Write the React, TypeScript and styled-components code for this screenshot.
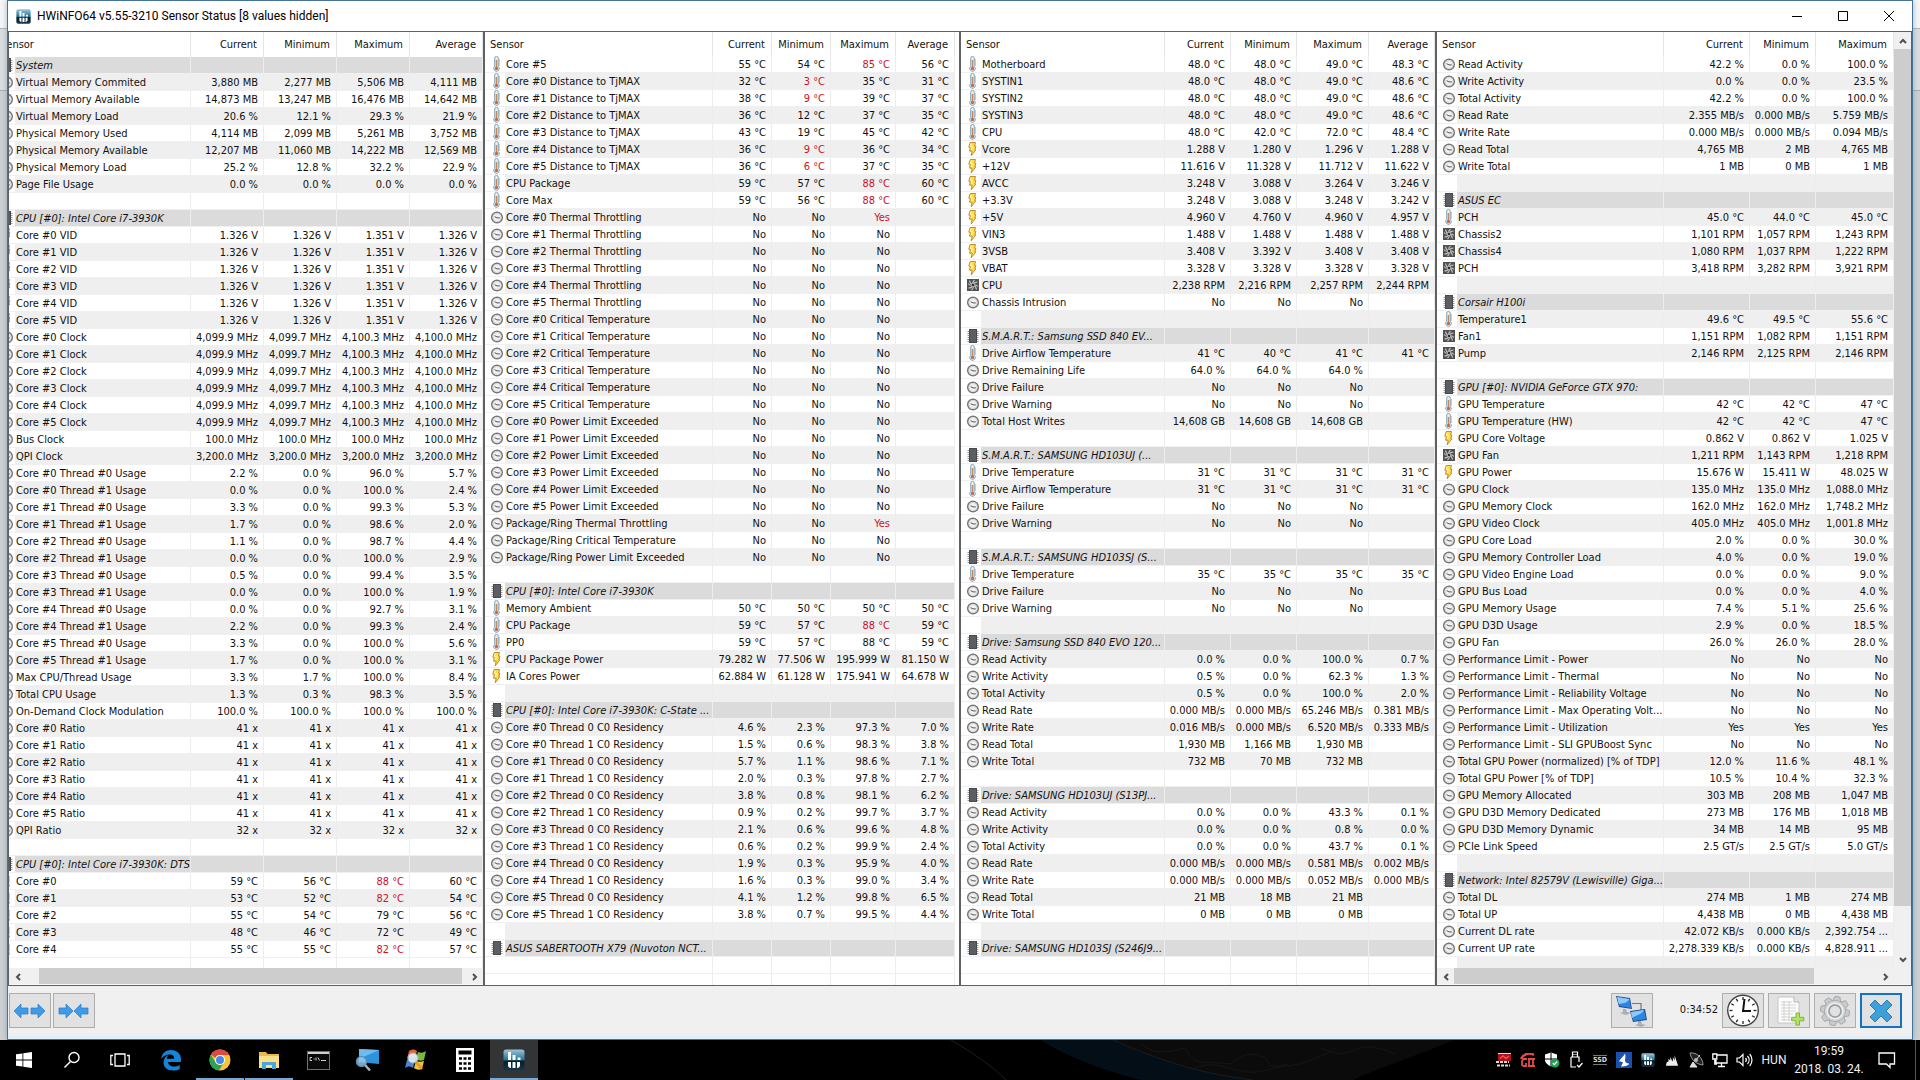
import React from "react";
import styled, { createGlobalStyle, css } from "styled-components";

/* ---------- data ---------- */

type Kind = "group" | "temp" | "volt" | "fan" | "clock" | "blank" | "empty";
interface Row { kind: Kind; label: string; values: string[] }
interface PanelData {
  id: string;
  headers: string[];
  widths: number[];
  rows: Row[];
  headHeight: number;
  shift?: number;
  gutter?: number;
  hbar?: { from: number; to: number };
  vbar?: boolean;
}

const KINDS: Record<string, Kind> = { g: "group", t: "temp", v: "volt", f: "fan", c: "clock", b: "blank", e: "empty" };

/* One line per row: kind | label | values. "!" marks a reading in alarm colour. */
function parse(text: string): Row[] {
  return text.trim().split("\n").map((line) => {
    const [k, label = "", ...values] = line.trim().split("|");
    return { kind: KINDS[k], label, values };
  });
}

const systemRows = parse(`
g|System
c|Virtual Memory Commited|3,880 MB|2,277 MB|5,506 MB|4,111 MB
c|Virtual Memory Available|14,873 MB|13,247 MB|16,476 MB|14,642 MB
c|Virtual Memory Load|20.6 %|12.1 %|29.3 %|21.9 %
c|Physical Memory Used|4,114 MB|2,099 MB|5,261 MB|3,752 MB
c|Physical Memory Available|12,207 MB|11,060 MB|14,222 MB|12,569 MB
c|Physical Memory Load|25.2 %|12.8 %|32.2 %|22.9 %
c|Page File Usage|0.0 %|0.0 %|0.0 %|0.0 %
b
g|CPU [#0]: Intel Core i7-3930K
v|Core #0 VID|1.326 V|1.326 V|1.351 V|1.326 V
v|Core #1 VID|1.326 V|1.326 V|1.351 V|1.326 V
v|Core #2 VID|1.326 V|1.326 V|1.351 V|1.326 V
v|Core #3 VID|1.326 V|1.326 V|1.351 V|1.326 V
v|Core #4 VID|1.326 V|1.326 V|1.351 V|1.326 V
v|Core #5 VID|1.326 V|1.326 V|1.351 V|1.326 V
c|Core #0 Clock|4,099.9 MHz|4,099.7 MHz|4,100.3 MHz|4,100.0 MHz
c|Core #1 Clock|4,099.9 MHz|4,099.7 MHz|4,100.3 MHz|4,100.0 MHz
c|Core #2 Clock|4,099.9 MHz|4,099.7 MHz|4,100.3 MHz|4,100.0 MHz
c|Core #3 Clock|4,099.9 MHz|4,099.7 MHz|4,100.3 MHz|4,100.0 MHz
c|Core #4 Clock|4,099.9 MHz|4,099.7 MHz|4,100.3 MHz|4,100.0 MHz
c|Core #5 Clock|4,099.9 MHz|4,099.7 MHz|4,100.3 MHz|4,100.0 MHz
c|Bus Clock|100.0 MHz|100.0 MHz|100.0 MHz|100.0 MHz
c|QPI Clock|3,200.0 MHz|3,200.0 MHz|3,200.0 MHz|3,200.0 MHz
c|Core #0 Thread #0 Usage|2.2 %|0.0 %|96.0 %|5.7 %
c|Core #0 Thread #1 Usage|0.0 %|0.0 %|100.0 %|2.4 %
c|Core #1 Thread #0 Usage|3.3 %|0.0 %|99.3 %|5.3 %
c|Core #1 Thread #1 Usage|1.7 %|0.0 %|98.6 %|2.0 %
c|Core #2 Thread #0 Usage|1.1 %|0.0 %|98.7 %|4.4 %
c|Core #2 Thread #1 Usage|0.0 %|0.0 %|100.0 %|2.9 %
c|Core #3 Thread #0 Usage|0.5 %|0.0 %|99.4 %|3.5 %
c|Core #3 Thread #1 Usage|0.0 %|0.0 %|100.0 %|1.9 %
c|Core #4 Thread #0 Usage|0.0 %|0.0 %|92.7 %|3.1 %
c|Core #4 Thread #1 Usage|2.2 %|0.0 %|99.3 %|2.4 %
c|Core #5 Thread #0 Usage|3.3 %|0.0 %|100.0 %|5.6 %
c|Core #5 Thread #1 Usage|1.7 %|0.0 %|100.0 %|3.1 %
c|Max CPU/Thread Usage|3.3 %|1.7 %|100.0 %|8.4 %
c|Total CPU Usage|1.3 %|0.3 %|98.3 %|3.5 %
c|On-Demand Clock Modulation|100.0 %|100.0 %|100.0 %|100.0 %
c|Core #0 Ratio|41 x|41 x|41 x|41 x
c|Core #1 Ratio|41 x|41 x|41 x|41 x
c|Core #2 Ratio|41 x|41 x|41 x|41 x
c|Core #3 Ratio|41 x|41 x|41 x|41 x
c|Core #4 Ratio|41 x|41 x|41 x|41 x
c|Core #5 Ratio|41 x|41 x|41 x|41 x
c|QPI Ratio|32 x|32 x|32 x|32 x
b
g|CPU [#0]: Intel Core i7-3930K: DTS
t|Core #0|59 °C|56 °C|!88 °C|60 °C
t|Core #1|53 °C|52 °C|!82 °C|54 °C
t|Core #2|55 °C|54 °C|79 °C|56 °C
t|Core #3|48 °C|46 °C|72 °C|49 °C
t|Core #4|55 °C|55 °C|!82 °C|57 °C
e
`);

const cpuRows = parse(`
t|Core #5|55 °C|54 °C|!85 °C|56 °C
t|Core #0 Distance to TjMAX|32 °C|!3 °C|35 °C|31 °C
t|Core #1 Distance to TjMAX|38 °C|!9 °C|39 °C|37 °C
t|Core #2 Distance to TjMAX|36 °C|12 °C|37 °C|35 °C
t|Core #3 Distance to TjMAX|43 °C|19 °C|45 °C|42 °C
t|Core #4 Distance to TjMAX|36 °C|!9 °C|36 °C|34 °C
t|Core #5 Distance to TjMAX|36 °C|!6 °C|37 °C|35 °C
t|CPU Package|59 °C|57 °C|!88 °C|60 °C
t|Core Max|59 °C|56 °C|!88 °C|60 °C
c|Core #0 Thermal Throttling|No|No|!Yes|
c|Core #1 Thermal Throttling|No|No|No|
c|Core #2 Thermal Throttling|No|No|No|
c|Core #3 Thermal Throttling|No|No|No|
c|Core #4 Thermal Throttling|No|No|No|
c|Core #5 Thermal Throttling|No|No|No|
c|Core #0 Critical Temperature|No|No|No|
c|Core #1 Critical Temperature|No|No|No|
c|Core #2 Critical Temperature|No|No|No|
c|Core #3 Critical Temperature|No|No|No|
c|Core #4 Critical Temperature|No|No|No|
c|Core #5 Critical Temperature|No|No|No|
c|Core #0 Power Limit Exceeded|No|No|No|
c|Core #1 Power Limit Exceeded|No|No|No|
c|Core #2 Power Limit Exceeded|No|No|No|
c|Core #3 Power Limit Exceeded|No|No|No|
c|Core #4 Power Limit Exceeded|No|No|No|
c|Core #5 Power Limit Exceeded|No|No|No|
c|Package/Ring Thermal Throttling|No|No|!Yes|
c|Package/Ring Critical Temperature|No|No|No|
c|Package/Ring Power Limit Exceeded|No|No|No|
b
g|CPU [#0]: Intel Core i7-3930K
t|Memory Ambient|50 °C|50 °C|50 °C|50 °C
t|CPU Package|59 °C|57 °C|!88 °C|59 °C
t|PP0|59 °C|57 °C|88 °C|59 °C
v|CPU Package Power|79.282 W|77.506 W|195.999 W|81.150 W
v|IA Cores Power|62.884 W|61.128 W|175.941 W|64.678 W
b
g|CPU [#0]: Intel Core i7-3930K: C-State ...
c|Core #0 Thread 0 C0 Residency|4.6 %|2.3 %|97.3 %|7.0 %
c|Core #0 Thread 1 C0 Residency|1.5 %|0.6 %|98.3 %|3.8 %
c|Core #1 Thread 0 C0 Residency|5.7 %|1.1 %|98.6 %|7.1 %
c|Core #1 Thread 1 C0 Residency|2.0 %|0.3 %|97.8 %|2.7 %
c|Core #2 Thread 0 C0 Residency|3.8 %|0.8 %|98.1 %|6.2 %
c|Core #2 Thread 1 C0 Residency|0.9 %|0.2 %|99.7 %|3.7 %
c|Core #3 Thread 0 C0 Residency|2.1 %|0.6 %|99.6 %|4.8 %
c|Core #3 Thread 1 C0 Residency|0.6 %|0.2 %|99.9 %|2.4 %
c|Core #4 Thread 0 C0 Residency|1.9 %|0.3 %|95.9 %|4.0 %
c|Core #4 Thread 1 C0 Residency|1.6 %|0.3 %|99.0 %|3.4 %
c|Core #5 Thread 0 C0 Residency|4.1 %|1.2 %|99.8 %|6.5 %
c|Core #5 Thread 1 C0 Residency|3.8 %|0.7 %|99.5 %|4.4 %
b
g|ASUS SABERTOOTH X79 (Nuvoton NCT...
e
e
`);

const boardRows = parse(`
t|Motherboard|48.0 °C|48.0 °C|49.0 °C|48.3 °C
t|SYSTIN1|48.0 °C|48.0 °C|49.0 °C|48.6 °C
t|SYSTIN2|48.0 °C|48.0 °C|49.0 °C|48.6 °C
t|SYSTIN3|48.0 °C|48.0 °C|49.0 °C|48.6 °C
t|CPU|48.0 °C|42.0 °C|72.0 °C|48.4 °C
v|Vcore|1.288 V|1.280 V|1.296 V|1.288 V
v|+12V|11.616 V|11.328 V|11.712 V|11.622 V
v|AVCC|3.248 V|3.088 V|3.264 V|3.246 V
v|+3.3V|3.248 V|3.088 V|3.248 V|3.242 V
v|+5V|4.960 V|4.760 V|4.960 V|4.957 V
v|VIN3|1.488 V|1.488 V|1.488 V|1.488 V
v|3VSB|3.408 V|3.392 V|3.408 V|3.408 V
v|VBAT|3.328 V|3.328 V|3.328 V|3.328 V
f|CPU|2,238 RPM|2,216 RPM|2,257 RPM|2,244 RPM
c|Chassis Intrusion|No|No|No|
b
g|S.M.A.R.T.: Samsung SSD 840 EV...
t|Drive Airflow Temperature|41 °C|40 °C|41 °C|41 °C
c|Drive Remaining Life|64.0 %|64.0 %|64.0 %|
c|Drive Failure|No|No|No|
c|Drive Warning|No|No|No|
c|Total Host Writes|14,608 GB|14,608 GB|14,608 GB|
b
g|S.M.A.R.T.: SAMSUNG HD103UJ (...
t|Drive Temperature|31 °C|31 °C|31 °C|31 °C
t|Drive Airflow Temperature|31 °C|31 °C|31 °C|31 °C
c|Drive Failure|No|No|No|
c|Drive Warning|No|No|No|
b
g|S.M.A.R.T.: SAMSUNG HD103SJ (S...
t|Drive Temperature|35 °C|35 °C|35 °C|35 °C
c|Drive Failure|No|No|No|
c|Drive Warning|No|No|No|
b
g|Drive: Samsung SSD 840 EVO 120...
c|Read Activity|0.0 %|0.0 %|100.0 %|0.7 %
c|Write Activity|0.5 %|0.0 %|62.3 %|1.3 %
c|Total Activity|0.5 %|0.0 %|100.0 %|2.0 %
c|Read Rate|0.000 MB/s|0.000 MB/s|65.246 MB/s|0.381 MB/s
c|Write Rate|0.016 MB/s|0.000 MB/s|6.520 MB/s|0.333 MB/s
c|Read Total|1,930 MB|1,166 MB|1,930 MB|
c|Write Total|732 MB|70 MB|732 MB|
b
g|Drive: SAMSUNG HD103UJ (S13PJ...
c|Read Activity|0.0 %|0.0 %|43.3 %|0.1 %
c|Write Activity|0.0 %|0.0 %|0.8 %|0.0 %
c|Total Activity|0.0 %|0.0 %|43.7 %|0.1 %
c|Read Rate|0.000 MB/s|0.000 MB/s|0.581 MB/s|0.002 MB/s
c|Write Rate|0.000 MB/s|0.000 MB/s|0.052 MB/s|0.000 MB/s
c|Read Total|21 MB|18 MB|21 MB|
c|Write Total|0 MB|0 MB|0 MB|
b
g|Drive: SAMSUNG HD103SJ (S246J9...
e
e
`);

const gpuRows = parse(`
c|Read Activity|42.2 %|0.0 %|100.0 %
c|Write Activity|0.0 %|0.0 %|23.5 %
c|Total Activity|42.2 %|0.0 %|100.0 %
c|Read Rate|2.355 MB/s|0.000 MB/s|5.759 MB/s
c|Write Rate|0.000 MB/s|0.000 MB/s|0.094 MB/s
c|Read Total|4,765 MB|2 MB|4,765 MB
c|Write Total|1 MB|0 MB|1 MB
b
g|ASUS EC
t|PCH|45.0 °C|44.0 °C|45.0 °C
f|Chassis2|1,101 RPM|1,057 RPM|1,243 RPM
f|Chassis4|1,080 RPM|1,037 RPM|1,222 RPM
f|PCH|3,418 RPM|3,282 RPM|3,921 RPM
b
g|Corsair H100i
t|Temperature1|49.6 °C|49.5 °C|55.6 °C
f|Fan1|1,151 RPM|1,082 RPM|1,151 RPM
f|Pump|2,146 RPM|2,125 RPM|2,146 RPM
b
g|GPU [#0]: NVIDIA GeForce GTX 970:
t|GPU Temperature|42 °C|42 °C|47 °C
t|GPU Temperature (HW)|42 °C|42 °C|47 °C
v|GPU Core Voltage|0.862 V|0.862 V|1.025 V
f|GPU Fan|1,211 RPM|1,143 RPM|1,218 RPM
v|GPU Power|15.676 W|15.411 W|48.025 W
c|GPU Clock|135.0 MHz|135.0 MHz|1,088.0 MHz
c|GPU Memory Clock|162.0 MHz|162.0 MHz|1,748.2 MHz
c|GPU Video Clock|405.0 MHz|405.0 MHz|1,001.8 MHz
c|GPU Core Load|2.0 %|0.0 %|30.0 %
c|GPU Memory Controller Load|4.0 %|0.0 %|19.0 %
c|GPU Video Engine Load|0.0 %|0.0 %|9.0 %
c|GPU Bus Load|0.0 %|0.0 %|4.0 %
c|GPU Memory Usage|7.4 %|5.1 %|25.6 %
c|GPU D3D Usage|2.9 %|0.0 %|18.5 %
c|GPU Fan|26.0 %|26.0 %|28.0 %
c|Performance Limit - Power|No|No|No
c|Performance Limit - Thermal|No|No|No
c|Performance Limit - Reliability Voltage|No|No|No
c|Performance Limit - Max Operating Volt...|No|No|No
c|Performance Limit - Utilization|Yes|Yes|Yes
c|Performance Limit - SLI GPUBoost Sync|No|No|No
c|Total GPU Power (normalized) [% of TDP]|12.0 %|11.6 %|48.1 %
c|Total GPU Power [% of TDP]|10.5 %|10.4 %|32.3 %
c|GPU Memory Allocated|303 MB|208 MB|1,047 MB
c|GPU D3D Memory Dedicated|273 MB|176 MB|1,018 MB
c|GPU D3D Memory Dynamic|34 MB|14 MB|95 MB
c|PCIe Link Speed|2.5 GT/s|2.5 GT/s|5.0 GT/s
b
g|Network: Intel 82579V (Lewisville) Giga...
c|Total DL|274 MB|1 MB|274 MB
c|Total UP|4,438 MB|0 MB|4,438 MB
c|Current DL rate|42.072 KB/s|0.000 KB/s|2,392.754 ...
c|Current UP rate|2,278.339 KB/s|0.000 KB/s|4,828.911 ...
b
`);

const FOUR = ["Current", "Minimum", "Maximum", "Average"];
const PANELS: PanelData[] = [
  { id: "system", headers: FOUR, widths: [73, 73, 73, 73], rows: systemRows, headHeight: 25, shift: 14, hbar: { from: 3, to: 99 } },
  { id: "cpu", headers: FOUR, widths: [59, 59, 65, 59], rows: cpuRows, headHeight: 24, gutter: 4 },
  { id: "board", headers: FOUR, widths: [66, 66, 72, 66], rows: boardRows, headHeight: 24 },
  { id: "gpu", headers: FOUR.slice(0, 3), widths: [86, 66, 78], rows: gpuRows, headHeight: 24, hbar: { from: 0, to: 85 }, vbar: true },
];

/* ---------- frame ---------- */

const UI = `"DejaVu Sans Condensed", "DejaVu Sans", sans-serif`;
const SHELL = `Roboto, "Open Sans", sans-serif`;

const GlobalStyle = createGlobalStyle`
  *, *::before, *::after { box-sizing: border-box; }
  body { margin: 0; background: #000; overflow: hidden; }
  button { font: inherit; color: inherit; padding: 0; margin: 0; border: 0; background: none; }
  svg { display: block; flex: none; }
`;

const Screen = styled.div`
  display: flex;
  flex-direction: column;
  height: 100vh;
  font-family: ${UI};
  font-size: 11px;
  line-height: 16px;
  color: #111;
`;

const Desktop = styled.main`
  flex: 1;
  min-height: 0;
  display: flex;
  padding: 0 7px;
  background: linear-gradient(#f6f7f8 0 28px, #b4b8bc 28px 29px, #dcdee0 29px 90px, #a8adb2 90px 91px, #cfd1d3 91px 100%);
`;

const Window = styled.section`
  flex: 1;
  min-width: 0;
  display: flex;
  flex-direction: column;
  background: #f0f0f0;
  border: 1px solid #44749a;
  box-shadow: 0 0 6px rgba(60, 110, 150, 0.45);
`;

const TitleBar = styled.header`
  height: 30px;
  flex: none;
  display: flex;
  align-items: center;
  gap: 6px;
  padding-left: 8px;
  background: #fff;
`;

const Title = styled.h1`
  flex: 1;
  margin: 0;
  font: 400 12px/16px ${SHELL};
  color: #000;
`;

const CaptionButtons = styled.div`
  display: flex;
`;

const CaptionButton = styled.button`
  width: 46px;
  height: 30px;
  display: grid;
  place-items: center;
`;

const Panels = styled.div`
  flex: 1;
  min-height: 0;
  display: flex;
`;

/* ---------- sensor panel ---------- */

const Panel = styled.section`
  flex: 1;
  min-width: 0;
  display: flex;
  flex-direction: column;
  background: #fff;
  border: 1px solid #5f6163;
`;

const PanelBody = styled.div`
  flex: 1;
  min-height: 0;
  display: flex;
`;

const Viewport = styled.div<{ $gutter: number }>`
  flex: 1;
  min-width: 0;
  overflow: hidden;
  padding-right: ${(p) => p.$gutter}px;
`;

const Table = styled.table<{ $shift: number }>`
  width: calc(100% + ${(p) => p.$shift}px);
  margin-left: -${(p) => p.$shift}px;
  table-layout: fixed;
  border-collapse: separate;
  border-spacing: 0;
`;

const HeadCell = styled.th<{ $first?: boolean; $h: number }>`
  height: ${(p) => p.$h}px;
  padding: 1px 6px 0 5px;
  border-right: 1px solid #e3e5e6;
  font-weight: 400;
  text-align: ${(p) => (p.$first ? "left" : "right")};
  white-space: nowrap;
`;

const cell = css`
  height: 17px;
  padding: 0;
  border-bottom: 1px solid #f0f0f0;
  overflow: hidden;
  white-space: nowrap;
`;

const textCell = css`
  ${cell}
  padding-top: 2px;
  line-height: 14px;
  border-right: 1px solid #ededed;
`;

const IconCell = styled.td`
  ${cell}
  padding-left: 6px;
`;

const LabelCell = styled.td`
  ${textCell}
  padding-left: 1px;
`;

const ValueCell = styled.td<{ $alarm?: boolean }>`
  ${textCell}
  padding-right: 5px;
  text-align: right;
  color: ${(p) => (p.$alarm ? "#d0121f" : "inherit")};
`;

const Tr = styled.tr<{ $kind: Kind; $odd: boolean }>`
  ${LabelCell}, ${ValueCell} {
    background: ${(p) => (p.$kind === "group" ? "#dbdbdb" : p.$odd && p.$kind !== "empty" ? "#efefef" : "#fff")};
    font-style: ${(p) => (p.$kind === "group" ? "italic" : "normal")};
  }
`;

/* ---------- scroll bars ---------- */

const HBar = styled.div<{ $corner: boolean }>`
  flex: none;
  height: 17px;
  display: flex;
  background: #f0f0f0;
  border-bottom: 1px solid #fafafa;
  padding-right: ${(p) => (p.$corner ? 17 : 0)}px;
`;

const VBar = styled.div`
  flex: none;
  width: 17px;
  display: flex;
  flex-direction: column;
  background: #f0f0f0;
`;

const Arrow = styled.button`
  flex: none;
  width: 17px;
  height: 17px;
  display: grid;
  place-items: center;
`;

const Track = styled.div<{ $from: number; $to: number; $vertical?: boolean }>`
  flex: 1;
  display: flex;
  flex-direction: ${(p) => (p.$vertical ? "column" : "row")};
  &::before { content: ""; flex: ${(p) => p.$from} 0 0; }
  &::after { content: ""; flex: ${(p) => 100 - p.$to} 0 0; }
  & > span { flex: ${(p) => p.$to - p.$from} 0 0; background: #cdcdcd; }
`;

const Chevron = ({ turn }: { turn: number }) => (
  <svg width="10" height="10" viewBox="0 0 10 10">
    <path d="M2 7l3-3 3 3" fill="none" stroke="#505050" strokeWidth="2" transform={`rotate(${turn} 5 5)`} />
  </svg>
);

/* ---------- row icons ---------- */

const Thermometer = () => (
  <svg width="13" height="16" viewBox="0 0 13 16">
    <path d="M3.700 2.200a1.800 1.800 0 0 1 3.600 0v8.200a2.800 2.800 0 1 1-3.600 0z" fill="#e6eff5" stroke="#86a3b5" />
    <path d="M5.500 4v7.500" stroke="#c08a5c" strokeWidth="1.500" />
    <path d="M8.500 3v7" stroke="#b9c2c8" strokeWidth="0.800" />
    <circle cx="5.500" cy="12.500" r="1.700" fill="#c4694a" />
  </svg>
);
const Bolt = () => (
  <svg width="13" height="16" viewBox="0 0 13 16">
    <path d="M3.200 1.500h5.300L7.600 5.200h1.200L7.900 9h.9L4.200 14.800l1-4.600H2.600l.7-4H1.800z" fill="#ffdd45" stroke="#b9802a" strokeWidth="0.900" />
    <path d="M4.200 2.700L3.300 5.600h2L4.500 9" fill="none" stroke="#fff7b5" />
  </svg>
);
const Fan = () => (
  <svg width="13" height="16" viewBox="0 0 13 16">
    <rect x="0" y="2" width="12" height="12" fill="#505050" />
    <path d="M6 8Q3 7 2.500 3.500M6 8Q5 5 7.500 3M6 8Q7 5 10.500 5M6 8Q9 7 11 9.500M6 8Q9 9 9.500 12.500M6 8Q7 11 4.500 13M6 8Q5 11 1.500 11M6 8Q3 9 1 6.500" fill="none" stroke="#c4c4c4" strokeWidth="1.100" />
    <circle cx="6" cy="8" r="1.300" fill="#2d2d2d" />
  </svg>
);
const Dial = () => (
  <svg width="13" height="16" viewBox="0 0 13 16">
    <circle cx="6" cy="8.500" r="5.300" fill="#f1f1f1" stroke="#777" strokeWidth="1.500" />
    <circle cx="6" cy="8.500" r="4" fill="none" stroke="#d4d4d4" strokeWidth="0.800" />
    <path d="M3.600 7.700l2.400 1.200h2.800" fill="none" stroke="#555" strokeWidth="1" />
  </svg>
);
const Chip = () => (
  <svg width="13" height="16" viewBox="0 0 13 16">
    <path d="M.5 3.500h11M.5 5.500h11M.5 7.500h11M.5 9.500h11M.5 11.500h11M.5 13.500h11" stroke="#9a9a9a" />
    <rect x="2" y="1" width="8" height="14" fill="#47494d" />
    <rect x="3" y="2" width="6" height="12" fill="#5b5e63" />
  </svg>
);

const ICONS: Partial<Record<Kind, () => React.JSX.Element>> = { temp: Thermometer, volt: Bolt, fan: Fan, clock: Dial, group: Chip };

function SensorPanel({ data }: { data: PanelData }) {
  const { headers, widths, rows, shift = 0, gutter = 0, hbar, vbar = false, headHeight } = data;
  return (
    <Panel aria-label={data.id}>
      <PanelBody>
        <Viewport $gutter={gutter}>
          <Table $shift={shift}>
            <colgroup>
              <col width={20} />
              <col />
              {widths.map((w, i) => <col key={i} width={w} />)}
            </colgroup>
            <thead>
              <tr>
                <HeadCell colSpan={2} $first $h={headHeight}>Sensor</HeadCell>
                {headers.map((h) => <HeadCell key={h} $h={headHeight}>{h}</HeadCell>)}
              </tr>
            </thead>
            <tbody>
              {rows.map((row, i) => {
                const Icon = ICONS[row.kind];
                return (
                  <Tr key={i} $kind={row.kind} $odd={i % 2 === 1}>
                    <IconCell>{Icon && <Icon />}</IconCell>
                    <LabelCell>{row.label}</LabelCell>
                    {headers.map((h, c) => {
                      const v = row.values[c] ?? "";
                      return <ValueCell key={h} $alarm={v.startsWith("!")}>{v.replace("!", "")}</ValueCell>;
                    })}
                  </Tr>
                );
              })}
            </tbody>
          </Table>
        </Viewport>
        {vbar && (
          <VBar>
            <Arrow aria-label="Scroll up"><Chevron turn={0} /></Arrow>
            <Track $from={0} $to={95} $vertical><span /></Track>
            <Arrow aria-label="Scroll down"><Chevron turn={180} /></Arrow>
          </VBar>
        )}
      </PanelBody>
      {hbar && (
        <HBar $corner={vbar}>
          <Arrow aria-label="Scroll left"><Chevron turn={-90} /></Arrow>
          <Track $from={hbar.from} $to={hbar.to}><span /></Track>
          <Arrow aria-label="Scroll right"><Chevron turn={90} /></Arrow>
        </HBar>
      )}
    </Panel>
  );
}

/* ---------- footer ---------- */

const Footer = styled.footer`
  flex: none;
  height: 53px;
  display: flex;
  align-items: flex-start;
  padding: 7px 10px 0 1px;
  border-bottom: 3px solid #dff0fa;
`;

const ToolGroup = styled.div<{ $gap: number }>`
  display: flex;
  gap: ${(p) => p.$gap}px;
`;

const ToolButton = styled.button<{ $primary?: boolean }>`
  width: 42px;
  height: 35px;
  display: grid;
  place-items: center;
  background: #e1e1e1;
  border: ${(p) => (p.$primary ? "2px solid #1173c7" : "1px solid #adadad")};
`;

const Spacer = styled.div`flex: 1;`;

const Elapsed = styled.time`
  width: 61px;
  line-height: 33px;
  text-align: right;
`;

const ArrowPair = ({ inward }: { inward?: boolean }) => (
  <svg width="34" height="18" viewBox="0 0 34 18" fill="#3d9be9" stroke="#2b7dc4" strokeWidth="0.7">
    {inward ? (
      <>
        <path d="M2 6h7V2l7 7-7 7v-4H2z" />
        <path d="M31 6h-7V2l-7 7 7 7v-4h7z" />
      </>
    ) : (
      <>
        <path d="M15 6H8V2L1 9l7 7v-4h7z" />
        <path d="M18 6h7V2l7 7-7 7v-4h-7z" />
      </>
    )}
  </svg>
);

const NetworkIcon = () => (
  <svg width="34" height="32" viewBox="0 0 34 32">
    <path d="M17 8.500h9V17" fill="none" stroke="#777" strokeWidth="1.200" />
    <path d="M8 14l3 0 1 3 4 1-5 2-6-2 3-1z" fill="#a9afb5" />
    <path d="M1 1l14 2 2 11-13-2z" fill="#1d4b8f" />
    <path d="M2 2l12.500 2 1.500 9-11.500-2z" fill="#2f86e0" />
    <path d="M2 2l12.500 2c-3 5-7 4-10.700 5z" fill="#8ccbf9" />
    <path d="M23 26l3 0 1 3 4 1-5 2-6-2 3-1z" fill="#a9afb5" />
    <path d="M15 16l15-2 2 11-14 2z" fill="#1d4b8f" />
    <path d="M16 17l13-2 2 9-12.500 2z" fill="#2f86e0" />
    <path d="M16 17l13-2c-3 5-8 5-12 8z" fill="#8ccbf9" />
  </svg>
);

const ClockIcon = () => (
  <svg width="34" height="33" viewBox="0 0 34 33">
    <circle cx="17" cy="16.500" r="15.300" fill="#fff" stroke="#444" strokeWidth="1.400" />
    <g stroke="#222" strokeWidth="1.300">
      {Array.from({ length: 12 }, (_, i) => (
        <path key={i} d="M17 3v3" transform={`rotate(${i * 30} 17 16.5)`} />
      ))}
    </g>
    <path d="M17 17.500L18.500 5M16 17h9" stroke="#111" strokeWidth="2" fill="none" />
  </svg>
);

const LogIcon = () => (
  <svg width="32" height="32" viewBox="0 0 32 32">
    <path d="M5 2h16l5 5v21H5z" fill="#fdfdfd" stroke="#c5c5c5" />
    <path d="M21 2v5h5" fill="#e8e8e8" stroke="#b5b5b5" />
    <path d="M8 7h11M8 10h15M8 13h15M8 16h15M8 19h12M8 22h10M8 25h10M11 6v20M16 6v20" stroke="#cfd1d3" />
    <path d="M23 18h3.500v4.300h4.300v3.500h-4.300v4.300H23v-4.300h-4.300v-3.500H23z" fill="#b4e263" stroke="#7db533" />
  </svg>
);

const GearIcon = () => (
  <svg width="34" height="32" viewBox="0 0 34 32">
    <g fill="#c9cbcd" stroke="#a3a6a8" strokeWidth="0.9" strokeLinejoin="round">
      {Array.from({ length: 8 }, (_, i) => (
        <path key={i} d="M12.500 8L14.500 1.500h5L21.500 8z" transform={`rotate(${i * 45 + 10} 17 16)`} />
      ))}
      <circle cx="17" cy="16" r="10.500" />
    </g>
    <circle cx="17" cy="16" r="10.200" fill="#d0d2d4" />
    <circle cx="17" cy="16" r="7.800" fill="none" stroke="#efefef" strokeWidth="1.600" />
    <circle cx="17" cy="16" r="6" fill="#e1e1e1" stroke="#999c9f" strokeWidth="1.600" />
  </svg>
);

const CrossIcon = () => (
  <svg width="26" height="26" viewBox="0 0 26 26">
    <path d="M7 2l6 6 6-6 5 5-6 6 6 6-5 5-6-6-6 6-5-5 6-6-6-6z" fill="#3f9fd8" stroke="#2c7fb6" strokeLinejoin="round" />
  </svg>
);

const AppIcon = ({ size }: { size: number }) => (
  <svg width={size} height={size} viewBox="0 0 22 22">
    <defs>
      <linearGradient id={`app${size}`} x1="0" y1="0" x2="0" y2="1">
        <stop offset="0" stopColor="#9fc4d6" />
        <stop offset="0.5" stopColor="#1d7397" />
        <stop offset="0.55" stopColor="#0b1c26" />
        <stop offset="1" stopColor="#16384a" />
      </linearGradient>
    </defs>
    <rect x="0.500" y="0.500" width="21" height="21" rx="2.500" fill={`url(#app${size})`} />
    <g fill="#fff">
      <path d="M5 3h3v8H5zM9.500 6h3v5h-3zM14.500 8.500h3V11h-3z" />
      <path d="M5 13h3v6a3 3 0 0 1-3-2zM9.500 13h3v6h-3zM14 13h3v4a3 3 0 0 1-3 2z" />
    </g>
  </svg>
);

/* ---------- taskbar ---------- */

const Taskbar = styled.nav`
  flex: none;
  height: 40px;
  display: flex;
  position: relative;
  overflow: hidden;
  background: #000;
  color: #f2f2f2;
  font: 400 12px/18px ${SHELL};
`;

const Wallpaper = styled.svg`
  position: absolute;
  inset: 0 auto 0 49%;
`;

const TaskGroup = styled.div<{ $gap: number }>`
  display: flex;
  gap: ${(p) => p.$gap}px;
  margin-right: 3px;
`;

const TaskButton = styled.button<{ $open?: boolean; $active?: boolean }>`
  width: 48px;
  height: 40px;
  display: grid;
  place-items: center;
  background: ${(p) => (p.$active ? "#333436" : "transparent")};
  box-shadow: ${(p) => (p.$open || p.$active ? "inset 0 -2px #76a9d8" : "none")};
`;

const TrayButton = styled.button<{ $w?: number }>`
  position: relative;
  width: ${(p) => p.$w ?? 24}px;
  height: 40px;
  display: grid;
  place-items: center;
  text-align: center;
`;

const TrayLabel = styled.span`
  display: block;
  font: 700 7px/8px ${UI};
  color: #d8d8d8;
  border-top: 1px solid #777;
  border-bottom: 1px solid #777;
`;

const DesktopPeek = styled.button`
  width: 5px;
  height: 40px;
  margin-left: 7px;
  border-left: 1px solid #555;
`;

const StartIcon = () => (
  <svg width="16" height="16" viewBox="0 0 16 16" fill="#fff"><path d="M0 2.300l6.500-.9v6.200H0zM7.300 1.300L16 0v7.600H7.300zM0 8.400h6.500v6.200L0 13.700zM7.300 8.400H16V16l-8.700-1.300z" /></svg>
);
const SearchIcon = () => (
  <svg width="18" height="18" viewBox="0 0 18 18" fill="none" stroke="#fff" strokeWidth="1.400"><circle cx="11" cy="6.500" r="5" /><path d="M7.500 10.500L1.500 16.500" /></svg>
);
const TaskViewIcon = () => (
  <svg width="20" height="14" viewBox="0 0 20 14" fill="none" stroke="#fff" strokeWidth="1.300"><path d="M5 1h10v12H5zM3 2.500H.8v9H3M17 2.500h2.200v9H17" /></svg>
);
const EdgeIcon = () => (
  <svg width="22" height="22" viewBox="0 0 22 22"><path d="M1 10C2 4 6 1 11 1c6 0 10 4 10 9v3H8c.3 3 3 4.500 6 4.500 2.200 0 4-.5 5.700-1.500v4c-2 1-4 1.500-6.700 1.500-6 0-9.500-3.500-9.500-8 0-3.500 2-6 5-7.500-1 1-1.600 2.200-1.800 3.700h7.500C14.200 7.500 13 5.500 9.500 5.500 6 5.500 3 7 1 10z" fill="#1584d8" /></svg>
);
const ChromeIcon = () => (
  <svg width="22" height="22" viewBox="0 0 22 22">
    <circle cx="11" cy="11" r="10.500" fill="#f7c52f" />
    <path d="M11 .5a10.500 10.500 0 0 1 9.300 5.500H11a5 5 0 0 0-4.600 3L2 5.600A10.500 10.500 0 0 1 11 .5z" fill="#dd4b3e" />
    <path d="M1.900 5.700A10.500 10.500 0 0 0 9.800 21.400l4.200-6.500a5 5 0 0 1-7.400-1.300z" fill="#2aa257" />
    <circle cx="11" cy="11" r="5" fill="#fff" /><circle cx="11" cy="11" r="4" fill="#4687f0" />
  </svg>
);
const FolderIcon = () => (
  <svg width="22" height="20" viewBox="0 0 22 20"><path d="M1 2h7l1.500 2H21v14H1z" fill="#e9b94b" /><path d="M1 6h20v12H1z" fill="#fbe08b" /><path d="M4 19v-7h14v7h-4v-4H8v4z" fill="#4fa5d8" /></svg>
);
const ConsoleIcon = () => (
  <svg width="23" height="19" viewBox="0 0 23 19"><rect x=".5" y=".5" width="22" height="18" fill="#0a0a0a" stroke="#6f6f6f" /><path d="M1 2h21" stroke="#d0d0d0" strokeWidth="2" /><path d="M3 6.500h2M3 6.500v3h2M6.500 8h1M9 6.500v3M11 6.500l1.500 3M14 9.500h5" stroke="#ccc" fill="none" /></svg>
);
const RemoteIcon = () => (
  <svg width="24" height="24" viewBox="0 0 24 24"><path d="M4 1l20 1v14L4 14z" fill="#2d93dc" /><path d="M4 1l20 1-20 9z" fill="#6cbcf0" /><circle cx="6.500" cy="13.500" r="5" fill="#9fd0f2" fillOpacity=".8" stroke="#5b8fb5" strokeWidth="1.400" /><path d="M10 17l5 5.500" stroke="#a7b0b8" strokeWidth="2.600" /></svg>
);
const FlagIcon = () => (
  <svg width="24" height="24" viewBox="0 0 24 24"><path d="M5 3c3-2 5-2 8 0l-2 8c-3-2-5-2-8 0z" fill="#e2633a" /><path d="M14 4c3 1 5 1 8-1l-2 9c-3 1-5 1-8-1z" fill="#7db83e" /><path d="M3 12c3-2 5-2 8 0l-2 8c-3-2-5-2-8 0z" fill="#4a86d2" /><path d="M12 13c3 1 5 1 8 0l-2 8c-3 1-5 1-8-1z" fill="#f0c338" /><circle cx="9" cy="10" r="5" fill="#e6f3fb" fillOpacity=".9" stroke="#9ab7cc" /><path d="M12 14l6 7" stroke="#e09a35" strokeWidth="2.600" /></svg>
);
const CalcIcon = () => (
  <svg width="18" height="24" viewBox="0 0 18 24"><path d="M0 0h18v24H0z" fill="#fff" /><path d="M2.500 2.500h13v4h-13z" fill="#000" /><path d="M3 10.500h3M7.500 10.500h3M12 10.500h3M3 15.500h3M7.500 15.500h3M12 15.500h3M3 20.500h3M7.500 20.500h3M12 20.500h3" stroke="#000" strokeWidth="2.400" /></svg>
);

const GpuIcon = () => (
  <svg width="16" height="14" viewBox="0 0 16 14"><path d="M2 0h13v8H2z" fill="#a3161c" /><path d="M2 .5h13" stroke="#ddd" /><path d="M4 5.500l3-2.500 3 2.500 3-2.500" stroke="#ff4c4c" strokeWidth="1.500" fill="none" /><path d="M0 9h13M1 12.500h13" stroke="#e8d5d5" strokeWidth="1.800" strokeDasharray="3 1" /></svg>
);
const TwinIcon = () => (
  <svg width="16" height="15" viewBox="0 0 16 15" fill="none" stroke="#e34a4f"><path d="M1 6a9 9 0 0 1 13-4" strokeWidth="2.500" /><path d="M7 6H3.500L2 8v4l1.500 1H6V10M9 6v7M13 6v7M8 6h7M8 13h7" strokeWidth="1.800" /></svg>
);
const ShieldIcon = () => (
  <svg width="16" height="16" viewBox="0 0 16 16"><path d="M1 2.500l6-2 6 2V8c0 3-3 5-6 6.500C4 13 1 11 1 8z" fill="#fff" /><path d="M7 .5v14M1 7h12" stroke="#000" /><circle cx="11" cy="11" r="4.500" fill="#1fa055" /><path d="M8.800 11l1.600 1.600L13.200 9.500" stroke="#fff" strokeWidth="1.300" fill="none" /></svg>
);
const UsbIcon = () => (
  <svg width="14" height="18" viewBox="0 0 14 18" fill="none" stroke="#fff" strokeWidth="1.200"><path d="M3.500 6V1h5v5M2 6h8v5M2 6v10h5M5 3v1M7 3v1M8 14l2 2 3.500-4" /></svg>
);
const BirdIcon = () => (
  <svg width="16" height="16" viewBox="0 0 16 16"><path d="M0 0h16v16H0z" fill="#1d50ad" /><path d="M9 1.500c-1 3-5 5-6 8 2 0 3 0 4 1l-2 4c4 0 8-1 8-3-2 0-4-1-4-3s1-4 0-7z" fill="#fff" /></svg>
);
const CityIcon = () => (
  <svg width="14" height="13" viewBox="0 0 16 14" fill="#eee"><path d="M1 13l1-4 2-1V5l2 2V3l2 4 1 1V3l2 4V1l2 6 2 6z" /></svg>
);
const DishIcon = () => (
  <svg width="17" height="16" viewBox="0 0 17 16"><path d="M2 1c1 6 5 11 13 12C15 6 9 0 2 1z" fill="#222" stroke="#999" /><path d="M8 8l4-5M5 10l-3 5h7z" fill="#ddd" stroke="#ddd" /><circle cx="8" cy="8" r="2" fill="#bbb" /></svg>
);
const MonitorIcon = () => (
  <svg width="16" height="15" viewBox="0 0 16 15" fill="none" stroke="#fff" strokeWidth="1.300"><path d="M5 2h10v8H4V7M6 13.500h7M9.500 10v3.500M.8 1h4v5h-4zM2.800 6v5H5" /></svg>
);
const SpeakerIcon = () => (
  <svg width="17" height="14" viewBox="0 0 17 14" fill="none" stroke="#fff" strokeWidth="1.200"><path d="M1 5h2.500L7 1.500v11L3.500 9H1zM9.500 5a3 3 0 0 1 0 4M11.500 3a6 6 0 0 1 0 8M13.700 1a9 9 0 0 1 0 12" /></svg>
);
const NoteIcon = () => (
  <svg width="18" height="18" viewBox="0 0 18 18" fill="none" stroke="#fff" strokeWidth="1.300"><path d="M1 2h15.500v11H12v3.500L8.500 13H1z" /></svg>
);

export default function App() {
  return (
    <Screen>
      <GlobalStyle />
      <Desktop>
        <Window>
          <TitleBar>
            <AppIcon size={15} />
            <Title>HWiNFO64 v5.55-3210 Sensor Status [8 values hidden]</Title>
            <CaptionButtons>
              <CaptionButton aria-label="Minimize">
                <svg width="10" height="10" stroke="#000"><path d="M0 5.500h10" /></svg>
              </CaptionButton>
              <CaptionButton aria-label="Maximize">
                <svg width="10" height="10" stroke="#000" fill="none"><path d="M.5.5h9v9h-9z" /></svg>
              </CaptionButton>
              <CaptionButton aria-label="Close">
                <svg width="10" height="10" stroke="#000"><path d="M0 0l10 10M10 0L0 10" /></svg>
              </CaptionButton>
            </CaptionButtons>
          </TitleBar>
          <Panels>
            {PANELS.map((p) => <SensorPanel key={p.id} data={p} />)}
          </Panels>
          <Footer>
            <ToolGroup $gap={2}>
              <ToolButton aria-label="Expand columns"><ArrowPair /></ToolButton>
              <ToolButton aria-label="Shrink columns"><ArrowPair inward /></ToolButton>
            </ToolGroup>
            <Spacer />
            <ToolGroup $gap={4}>
              <ToolButton aria-label="Remote monitoring"><NetworkIcon /></ToolButton>
              <Elapsed>0:34:52</Elapsed>
              <ToolButton aria-label="Reset clock"><ClockIcon /></ToolButton>
              <ToolButton aria-label="Start logging"><LogIcon /></ToolButton>
              <ToolButton aria-label="Settings"><GearIcon /></ToolButton>
              <ToolButton aria-label="Close sensors" $primary><CrossIcon /></ToolButton>
            </ToolGroup>
          </Footer>
        </Window>
      </Desktop>
      <Taskbar>
        <Wallpaper width="560" height="40" viewBox="0 0 560 40" aria-hidden="true">
          <path d="M100 0h72c50 22 90 34 140 40H200C160 30 120 14 100 0z" fill="#040e17" />
          <path d="M172 0c50 22 90 34 140 40h100c30-14 70-26 100-40z" fill="#0b0b0b" />
          <path d="M172 0c50 22 90 34 140 40M10 0c20 12 42 26 55 40" fill="none" stroke="#1a1e21" />
          <path d="M200 4q10 8 20 8t24-4q8 14 16 14t30 2q10-10 22-10t18 12q20 2 40-6t24-12M250 30q16-8 30-4t26 6 40-8M380 8q20 10 34 2t40 4" fill="none" stroke="#161616" />
        </Wallpaper>
        <TaskGroup $gap={0}>
          <TaskButton aria-label="Start"><StartIcon /></TaskButton>
          <TaskButton aria-label="Search"><SearchIcon /></TaskButton>
          <TaskButton aria-label="Task view"><TaskViewIcon /></TaskButton>
        </TaskGroup>
        <TaskGroup $gap={1}>
          <TaskButton aria-label="Edge"><EdgeIcon /></TaskButton>
          <TaskButton aria-label="Chrome" $open><ChromeIcon /></TaskButton>
          <TaskButton aria-label="File Explorer" $open><FolderIcon /></TaskButton>
          <TaskButton aria-label="Command Prompt"><ConsoleIcon /></TaskButton>
          <TaskButton aria-label="Remote search"><RemoteIcon /></TaskButton>
          <TaskButton aria-label="Windows search"><FlagIcon /></TaskButton>
          <TaskButton aria-label="Calculator"><CalcIcon /></TaskButton>
          <TaskButton aria-label="HWiNFO64" $active><AppIcon size={22} /></TaskButton>
        </TaskGroup>
        <Spacer />
        <TrayButton aria-label="GPU Tweak"><GpuIcon /></TrayButton>
        <TrayButton aria-label="Gaming utility"><TwinIcon /></TrayButton>
        <TrayButton aria-label="Security"><ShieldIcon /></TrayButton>
        <TrayButton aria-label="Safely remove hardware"><UsbIcon /></TrayButton>
        <TrayButton><TrayLabel>SSD</TrayLabel></TrayButton>
        <TrayButton aria-label="Messenger"><BirdIcon /></TrayButton>
        <TrayButton aria-label="HWiNFO64 tray"><AppIcon size={14} /></TrayButton>
        <TrayButton aria-label="Monitor"><CityIcon /></TrayButton>
        <TrayButton aria-label="Receiver"><DishIcon /></TrayButton>
        <TrayButton aria-label="Network"><MonitorIcon /></TrayButton>
        <TrayButton aria-label="Volume"><SpeakerIcon /></TrayButton>
        <TrayButton $w={36}>HUN</TrayButton>
        <TrayButton $w={74}>
          <span>19:59<br />2018. 03. 24.</span>
        </TrayButton>
        <TrayButton $w={42} aria-label="Notifications"><NoteIcon /></TrayButton>
        <DesktopPeek aria-label="Show desktop" />
      </Taskbar>
    </Screen>
  );
}
